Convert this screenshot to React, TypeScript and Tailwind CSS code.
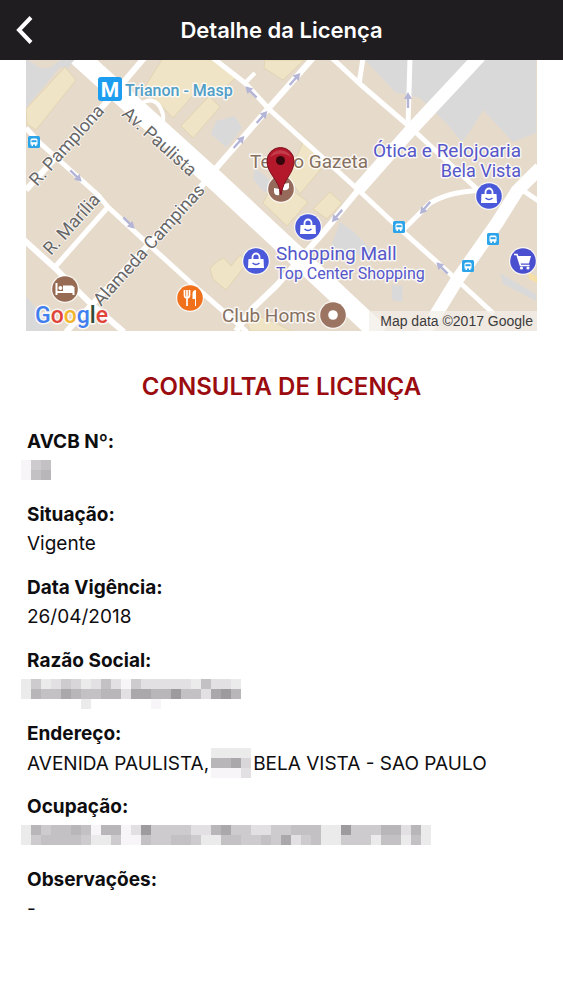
import React from 'react';

const roads = [
  { d: 'M78 56 L215 180 L380 334', width: 20 },
  { d: 'M480 56 L410 131 L357 191', width: 13 },
  { d: 'M540 168 L517 191 L497 223 L457 280 L424 334', width: 13 },
  { d: 'M360 188 L323 233 L277 285 L253 308 L236 331', width: 6 },
  { d: 'M145 57 L104 105 L26 190', width: 6 },
  { d: 'M26 128 L40 143 L98 195 L108 207 L147 243 L190 282 L230 317 L247 332', width: 5 },
  { d: 'M108 207 L55 267', width: 5 },
  { d: 'M24 240 L55 268 L90 303 L124 332', width: 6 },
  { d: 'M66 332 L150 243 L200 188 L218 166 L267 110 L313 58', width: 6 },
  { d: 'M213 58 L245 83 L270 110 L303 140 L353 185 L400 229 L457 280 L494 314', width: 5 },
  { d: 'M244 84 L255 73', width: 4 },
  { d: 'M332 58 L360 84 L410 127 L478 190', width: 5 },
  { d: 'M363 58 L359 84', width: 5 },
  { d: 'M410 58 L408 126', width: 5 },
  { d: 'M403 230 L430 203 Q446 194 463 192 L489 189', width: 5 },
  { d: 'M518 187 L540 202', width: 5 },
  { d: 'M142 103 Q155 96 161 109 Q165 117 162 126', width: 4 },
];

const buildings = [
  'M65 67 L76 80 L36 130 L27 124 L26 109 Z',
  'M163 58 L216 60 L236 78 L219 92 L202 85 L173 118 L158 102 L143 90 Z',
  'M209 96 L220 107 L193 138 L181 126 Z',
  'M265 60 L304 60 L283 80 L264 68 Z',
  'M276 178 L308 202 L287 226 L263 203 Z',
  'M330 192 L342 203 L327 219 L313 209 Z',
  'M303 142 L326 163 L300 194 L288 177 Z',
  'M218 261 L224 258 L231 266 L240 255 L248 262 L226 290 L213 279 L210 268 Z',
  'M247 322 L262 317 L292 331 L250 331 Z',
];

const greyAreas = [
  'M26 60 H75 L68 68 L60 67 L26 108 Z',
  'M365 60 H536 V133 L513 142 L483 110 L471 130 L462 142 L448 125 L420 98 L395 92 Z',
  'M26 296 L54 331 H26 Z',
  'M340 222 L354 232 L374 252 L369 258 L331 247 Z',
  'M216 121 L235 116 L242 128 L227 148 L211 134 Z',
  'M500 273 L536 294 V301 L503 284 Z',
  'M392 285 L403 286 L402 302 L392 300 Z',
  'M255 168 L266 176 L274 188 L264 192 L253 179 Z',
];

const arrows = [
  { x: 76, y: 176, angle: 45 },
  { x: 129, y: 223, angle: 45 },
  { x: 251, y: 92, angle: 225 },
  { x: 295, y: 79, angle: -48 },
  { x: 262, y: 117, angle: -48 },
  { x: 239, y: 142, angle: -48 },
  { x: 408, y: 100, angle: -90 },
  { x: 425, y: 208, angle: 130 },
  { x: 442, y: 268, angle: 225 },
  { x: 337, y: 216, angle: 130 },
];

const busStops = [
  { x: 34, y: 142 },
  { x: 399, y: 227 },
  { x: 493, y: 239 },
  { x: 468, y: 266 },
];

const shops = [
  { x: 308, y: 227 },
  { x: 256, y: 261 },
  { x: 489, y: 196 },
];

const googleLetters = [
  { letter: 'G', color: '#3f7ff0' },
  { letter: 'o', color: '#e04438' },
  { letter: 'o', color: '#f3b52b' },
  { letter: 'g', color: '#3f7ff0' },
  { letter: 'l', color: '#2f4a35' },
  { letter: 'e', color: '#e04438' },
];

// Each digit is the shade of one block, 0 is white
const shades = ['#ffffff', '#f7f5f7', '#ecebec', '#e2e0e2', '#d8d6d8', '#cdcbcd', '#c3c1c3', '#b9b6b9', '#aba8ab', '#9e9b9e'];

const Mosaic = ({ rows, label }: { rows: string[]; label: string }) => (
  <span role="img" aria-label={label} className="inline-flex flex-col align-middle">
    {rows.map((row, i) => (
      <span key={i} className="flex">
        {row.split('').map((shade, j) => (
          <span key={j} className="h-2.5 w-2.5" style={{ backgroundColor: shades[Number(shade)] }} />
        ))}
      </span>
    ))}
  </span>
);

const PoiCircle = ({ x, y, color, children }: { x: number; y: number; color: string; children?: React.ReactNode }) => (
  <g transform={`translate(${x} ${y})`}>
    <circle r="14" fill="#fff" opacity="0.75" />
    <circle r="12.8" fill={color} />
    {children}
  </g>
);

const LocationMap = () => (
  <svg
    viewBox="26 60 511 271"
    preserveAspectRatio="xMidYMid slice"
    role="img"
    aria-label="Mapa da localização"
    className="block h-[271px] w-full font-[Roboto,sans-serif]"
  >
    <rect x="0" y="0" width="600" height="400" fill="#e6dacb" />
    {greyAreas.map((d) => (
      <path key={d} d={d} fill="#dad9da" />
    ))}
    {buildings.map((d) => (
      <path key={d} d={d} fill="#f0e4c6" stroke="#e2d4b3" strokeWidth="1" />
    ))}
    <path d="M28 60 H60 L50 68 H40 Z" fill="#e6dacb" />
    <path d="M528 272 L537 277 V283 L529 279 Z" fill="#f6dfa6" />
    {roads.map((road) => (
      <path key={road.d} d={road.d} fill="none" stroke="#fff" strokeWidth={road.width} strokeLinejoin="round" />
    ))}
    {arrows.map((a) => (
      <g key={`${a.x}-${a.y}`} transform={`translate(${a.x} ${a.y}) rotate(${a.angle})`} stroke="#b4b5d6" fill="#b4b5d6">
        <path d="M-8 0 H3" strokeWidth="2.4" />
        <path d="M1 -4 L8 0 L1 4 Z" stroke="none" />
      </g>
    ))}

    <g fill="#676767" stroke="#fff" strokeWidth="2" strokeOpacity="0.75" paintOrder="stroke" fontSize="18">
      <text transform="translate(37 187) rotate(-48)">R. Pamplona</text>
      <text transform="translate(121 115) rotate(42)">Av. Paulista</text>
      <text transform="translate(51 256) rotate(-48)">R. Marília</text>
      <text transform="translate(101 307) rotate(-48)">Alameda Campinas</text>
    </g>

    <rect x="98" y="77" width="24" height="24" rx="3" fill="#1c9df0" />
    <text x="110" y="97" textAnchor="middle" fontSize="21" fontWeight="700" fill="#fff">M</text>
    <g stroke="#fff" strokeWidth="3" strokeOpacity="0.8" strokeLinejoin="round" paintOrder="stroke">
      <text x="125" y="96" fontSize="16" fontWeight="500" fill="#4f9fc9">Trianon - Masp</text>
      <text x="250" y="168" fontSize="19" fill="#86705f">Teatro Gazeta</text>
      <text x="222" y="322" fontSize="19" fill="#86705f">Club Homs</text>
      <g fill="#5557cb">
        <text x="521" y="157" fontSize="19" textAnchor="end">Ótica e Relojoaria</text>
        <text x="521" y="177" fontSize="18" textAnchor="end">Bela Vista</text>
        <text x="276" y="260" fontSize="19">Shopping Mall</text>
        <text x="276" y="279" fontSize="16">Top Center Shopping</text>
      </g>
    </g>

    {busStops.map((stop) => (
      <g key={`${stop.x}-${stop.y}`} transform={`translate(${stop.x} ${stop.y})`}>
        <rect x="-6" y="-6" width="12" height="12" rx="1.5" fill="#2ba4ea" />
        <path d="M-3.5 2.5 V-2 Q-3.5 -3.5 -2 -3.5 H2 Q3.5 -3.5 3.5 -2 V2.5 H2.5 V4 H1 V2.5 H-1 V4 H-2.5 V2.5 Z" fill="#fff" />
        <rect x="-2.5" y="-1.8" width="5" height="2" fill="#2ba4ea" />
      </g>
    ))}

    {shops.map((shop) => (
      <PoiCircle key={`${shop.x}-${shop.y}`} x={shop.x} y={shop.y} color="#4a59da">
        <path d="M-7.5 -2 H7.5 L8 7 H-8 Z" fill="#fff" />
        <path d="M-3.5 -2 V-4 A3.5 3.5 0 0 1 3.5 -4 V-2" fill="none" stroke="#fff" strokeWidth="1.8" />
        <path d="M-3.5 2 Q0 5 3.5 2" fill="none" stroke="#4a59da" strokeWidth="1.6" />
      </PoiCircle>
    ))}
    <PoiCircle x={523} y={261} color="#4a4fd0">
      <path d="M-9 -6.5 H-6 L-2.5 4.5 H6.5" fill="none" stroke="#fff" strokeWidth="1.7" />
      <path d="M-5.5 -5 H8 L6 2.5 H-3.5 Z" fill="#fff" />
      <circle cx="-1.5" cy="7" r="1.6" fill="#fff" />
      <circle cx="5" cy="7" r="1.6" fill="#fff" />
    </PoiCircle>
    <PoiCircle x={65} y={289} color="#966a53">
      <path d="M-8.5 -6 V6 M-8.5 3 H8.5 M8.5 6 V-2" fill="none" stroke="#fff" strokeWidth="2" />
      <path d="M-2 -3.5 H7 Q9 -3.5 9 -1 V2 H-2 Z" fill="#fff" />
      <circle cx="-4.6" cy="-1" r="2" fill="#fff" />
    </PoiCircle>
    <PoiCircle x={190} y={298} color="#f0701c">
      <path d="M-5.5 -8 V-3 Q-5.5 0 -3 0 Q-0.5 0 -0.5 -3 V-8 M-3 -8 V8" fill="none" stroke="#fff" strokeWidth="1.7" />
      <path d="M5 8 V1 H2.5 V-4 Q2.5 -8 6 -8 V8 Z" fill="#fff" />
    </PoiCircle>
    <PoiCircle x={333} y={315} color="#9c7462">
      <circle r="4.8" fill="#fff" />
    </PoiCircle>
    <PoiCircle x={281} y={189} color="#966a5a">
      <path d="M-7 -1 L-2 0 V6 Q-6 7 -7 3 Z M2 -5 L8 -6 V-1 Q6 2 2 1 Z" fill="#fff" />
    </PoiCircle>

    <path d="M281 195 C279 179 267 174 267 161 A13.5 13.5 0 0 1 294 161 C294 174 283 179 281 195 Z" fill="#b3192b" stroke="#7d1020" strokeWidth="1" />
    <path d="M270 157 A11.5 11.5 0 0 1 291 157 Q281 150 270 157 Z" fill="#cf5361" opacity="0.6" />
    <circle cx="280.5" cy="160.5" r="4.5" fill="#35060c" />

    <text x="35" y="323" fontSize="23" fontWeight="500" stroke="#fff" strokeWidth="3" strokeOpacity="0.8" paintOrder="stroke">
      {googleLetters.map((g, i) => (
        <tspan key={i} fill={g.color}>{g.letter}</tspan>
      ))}
    </text>
    <rect x="369" y="311" width="170" height="22" fill="#f3eee8" opacity="0.75" />
    <text x="533" y="326" fontSize="14" textAnchor="end" fill="#3c3c3c" className="font-['Liberation_Sans',sans-serif]">
      Map data ©2017 Google
    </text>
  </svg>
);

const Field = ({ label, children }: { label: string; children: React.ReactNode }) => (
  <div>
    <dt className="text-[19px] leading-7 font-bold">{label}</dt>
    <dd className="h-[29px] text-[19px] leading-[29px] whitespace-nowrap">{children}</dd>
  </div>
);

const App = () => {
  return (
    <div className="min-h-screen bg-white font-[Inter,sans-serif] text-[#0e0d0f]">
      <header className="grid h-[60px] grid-cols-[60px_1fr_60px] items-center bg-[#1f1d20] text-white">
        <button type="button" aria-label="Voltar" className="flex h-full items-center pl-4">
          <svg viewBox="0 0 17 28" className="h-7 w-[17px]" fill="none" stroke="currentColor" strokeWidth="4">
            <path d="M15 1.5 L3 14 L15 26.5" />
          </svg>
        </button>
        <h1 className="text-center text-[22px] leading-7 font-semibold">Detalhe da Licença</h1>
      </header>

      <main className="px-[26px] pb-16">
        <LocationMap />

        <h2 className="mt-10 text-center text-2xl leading-8 font-semibold text-[#9b0c10]">CONSULTA DE LICENÇA</h2>

        <dl className="mt-[25px] flex flex-col gap-4 pl-px">
          <Field label="AVCB Nº:">
            <span className="-ml-1.5 flex pt-1">
              <Mosaic label="Número oculto" rows={['156', '167']} />
            </span>
          </Field>
          <Field label="Situação:">Vigente</Field>
          <Field label="Data Vigência:">26/04/2018</Field>
          <Field label="Razão Social:">
            <span className="-ml-1.5 flex pt-1">
              <Mosaic
                label="Razão social oculta"
                rows={['2523542363153333326332', '2766876677388779663897', '0000002000000100000000']}
              />
            </span>
          </Field>
          <Field label="Endereço:">
            <span className="flex items-center gap-0.5">
              <span>AVENIDA PAULISTA,</span>
              <Mosaic label="Número oculto" rows={['2222', '7784', '1113']} />
              <span>BELA VISTA - SAO PAULO</span>
            </span>
          </Field>
          <Field label="Ocupação:">
            <span className="-ml-1.5 flex pt-1">
              <Mosaic
                label="Ocupação oculta"
                rows={['27566761771395555337855335566622955577372', '25666652251165566522665565835622555266262']}
              />
            </span>
          </Field>
          <Field label="Observações:">-</Field>
        </dl>
      </main>
    </div>
  );
};

export default App;
